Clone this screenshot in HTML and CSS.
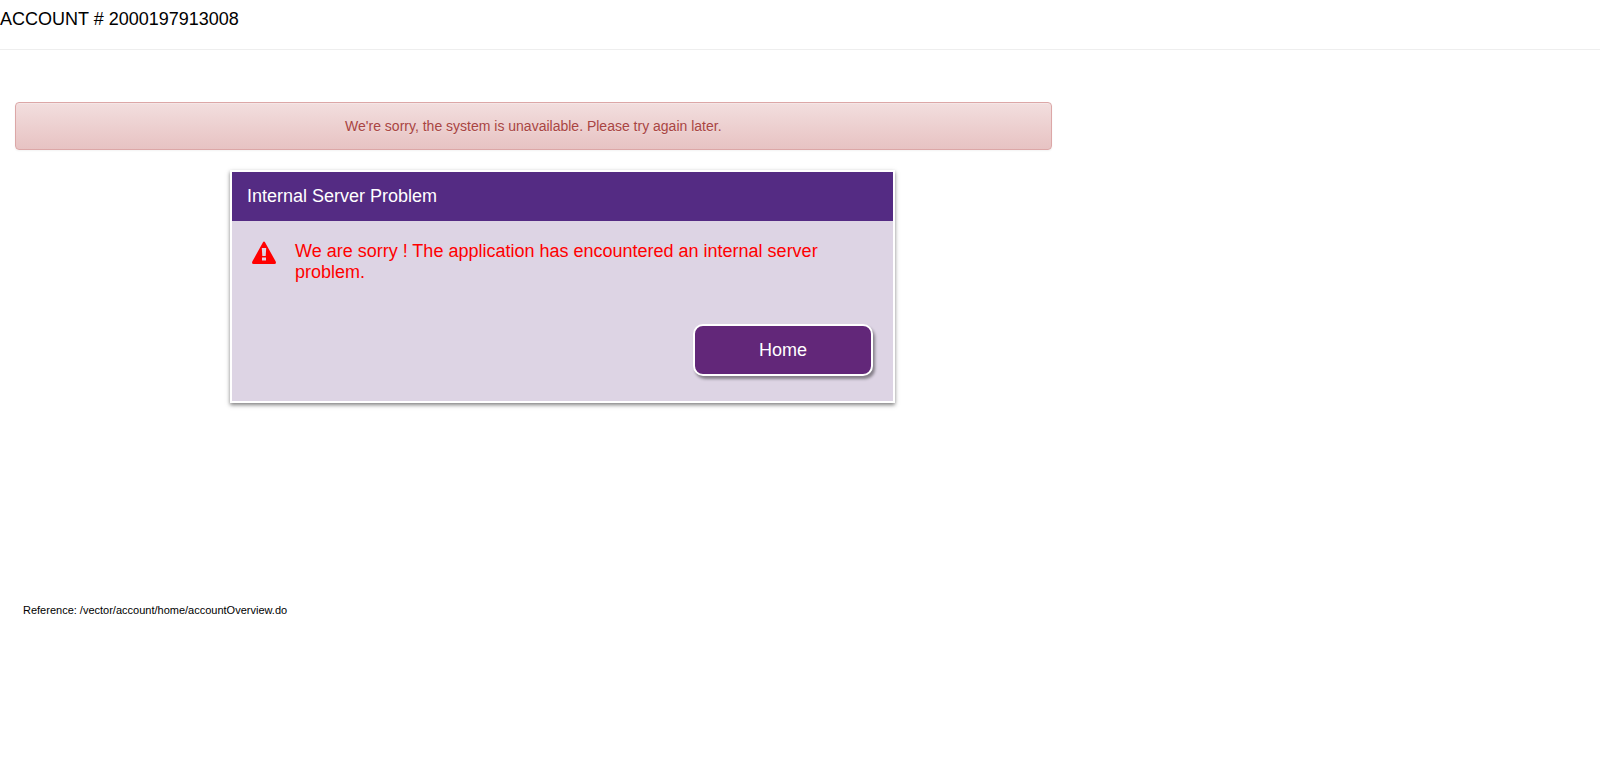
FILE: index.html
```
<!DOCTYPE html>
<html lang="en">
<head>
<meta charset="utf-8">
<title>Internal Server Problem</title>
<link rel="stylesheet" href="styles.css">
</head>
<body>
<header class="account-bar">
  <h4 class="account-title">ACCOUNT # 2000197913008</h4>
</header>
<main class="content">
  <div class="alert" role="alert">We're sorry, the system is unavailable. Please try again later.</div>
  <section class="panel">
    <h4 class="panel-heading">Internal Server Problem</h4>
    <div class="panel-body">
      <div class="message">
        <svg class="warning-icon" viewBox="0 0 24 23" aria-hidden="true">
          <path fill-rule="evenodd" d="M12 .5Q12.6 .5 13 1.2L23.7 20.6Q24.6 23 22.4 23H1.6Q-.6 23 .3 20.6L11 1.2Q11.4 .5 12 .5ZM9.8 7L10.3 15H13.7L14.2 7ZM10 16.4V19.6H14V16.4Z"/>
        </svg>
        <p class="message-text">We are sorry ! The application has encountered an internal server problem.</p>
      </div>
      <button class="home-button" type="button">Home</button>
    </div>
  </section>
  <p class="reference">Reference: /vector/account/home/accountOverview.do</p>
</main>
</body>
</html>
```
FILE: styles.css
```
* {
  box-sizing: border-box;
}

body {
  margin: 0;
  background: #fff;
  color: #000;
  font-family: "Liberation Sans", Arial, sans-serif;
  font-size: 14px;
  line-height: 20px;
}

.account-bar {
  padding: 9px 0 20px;
  border-bottom: 1px solid #eee;
}

.account-title,
.panel-heading {
  margin: 0;
  font-size: 18px;
  font-weight: 400;
}

.content {
  width: 66.6667%;
  padding: 52px 15px 0;
}

.alert {
  padding: 13px 15px;
  border: 1px solid #dca7a7;
  border-radius: 4px;
  background: linear-gradient(to bottom, #f2dede 0%, #ebcccc 65%, #e7c3c3 100%);
  box-shadow: inset 0 1px 0 rgba(255, 255, 255, 0.25), 0 1px 2px rgba(0, 0, 0, 0.05);
  color: #a94442;
  text-align: center;
  text-shadow: 0 1px 0 rgba(255, 255, 255, 0.2);
}

.panel {
  width: 665px;
  max-width: 100%;
  margin: 20px 0 0 215px;
  border: 2px solid #fff;
  background: #ddd4e4;
  box-shadow: 0 2px 4px rgba(0, 0, 0, 0.5);
}

.panel-heading {
  padding: 14px 15px 15px;
  background: #542b83;
  color: #fff;
}

.panel-body {
  display: flex;
  flex-direction: column;
  gap: 41px;
  padding: 20px 20px 25px;
}

.message {
  display: flex;
  gap: 19px;
  color: #f00;
}

.warning-icon {
  flex: none;
  width: 24px;
  height: 23px;
  fill: currentColor;
}

.message-text {
  margin: 0;
  font-size: 18px;
  line-height: 21px;
}

.home-button {
  align-self: flex-end;
  width: 180px;
  height: 52px;
  border: 2px solid #fff;
  border-radius: 10px;
  background: #622779;
  box-shadow: 2px 3px 3px rgba(0, 0, 0, 0.4);
  color: #fff;
  font: inherit;
  font-size: 18px;
}

.reference {
  margin: 197px 0 0;
  padding: 0 8px;
  font-size: 11px;
}
```
